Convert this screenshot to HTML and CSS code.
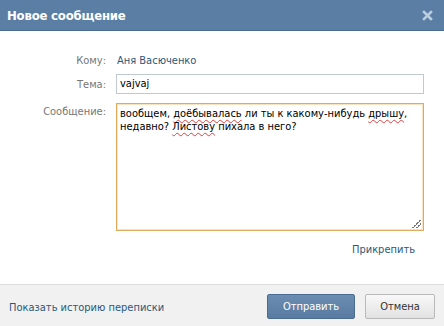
FILE: index.html
```html
<!DOCTYPE html>
<html lang="ru">
<head>
<meta charset="utf-8">
<title>Новое сообщение</title>
<link rel="stylesheet" href="styles.css">
</head>
<body>
<div class="dialog">
  <div class="header">
    <div class="title">Новое сообщение</div>
    <svg class="close" width="11" height="11" viewBox="0 0 11 11"><path d="M2 2 L9 9 M9 2 L2 9" stroke="#bccde0" stroke-width="2.6" stroke-linecap="square"/></svg>
  </div>
  <div class="body">
    <div class="form">
      <div class="label l-to">Кому:</div>
      <div class="field f-to"><a class="name">Аня Васюченко</a></div>
      <div class="label l-subj">Тема:</div>
      <div class="field f-subj"><div class="input">vajvaj</div></div>
      <div class="label l-msg">Сообщение:</div>
      <div class="field f-msg">
        <div class="textarea">вообщем, <span class="err">доёбывалась</span> ли ты к какому-нибудь <span class="err">дрышу</span>, недавно? <span class="err">Листову</span> пихала в него?<span class="grip"></span></div>
      </div>
    </div>
    <div class="attach"><a>Прикрепить</a></div>
  </div>
  <div class="footer">
    <a class="history">Показать историю переписки</a>
    <div class="buttons">
      <button class="btn send">Отправить</button>
      <button class="btn cancel">Отмена</button>
    </div>
  </div>
</div>
</body>
</html>
```
FILE: styles.css
```css
html, body {
  margin: 0;
  padding: 0;
  background: #fff;
}
body {
  font-family: "DejaVu Sans Condensed", "DejaVu Sans", sans-serif;
  font-stretch: semi-condensed;
  font-size: 11px;
  color: #000;
}
.dialog {
  width: 444px;
  height: 326px;
  display: flex;
  flex-direction: column;
}
.header {
  height: 30px;
  background: #5b7ea5;
  border-bottom: 1px solid #4a6b90;
  display: flex;
  align-items: center;
  justify-content: space-between;
  padding: 0 11px 0 7px;
  box-sizing: content-box;
}
.title {
  color: #fff;
  font-size: 13px;
  font-weight: bold;
  letter-spacing: -0.2px;
  padding-top: 1px;
}
.close {
  display: block;
}
.body {
  flex: 1;
  padding-top: 22px;
}
.form {
  display: grid;
  grid-template-columns: 106px 308px;
  column-gap: 10px;
  align-items: start;
}
.label {
  text-align: right;
  color: #777;
  line-height: 14px;
}
.l-to { padding-top: 1px; }
.f-to { line-height: 14px; padding-top: 1px; padding-left: 1px; }
.name { color: #2b587a; }
.l-subj { margin-top: 10px; line-height: 14px; }
.f-subj { margin-top: 6px; }
.input {
  height: 20px;
  box-sizing: border-box;
  border: 1px solid #c0c8d2;
  padding: 0 3px;
  line-height: 18px;
}
.l-msg { margin-top: 11px; }
.f-msg { margin-top: 9px; }
.textarea {
  position: relative;
  height: 128px;
  box-sizing: border-box;
  border: 1px solid #dcab5e;
  box-shadow: inset 0 0 0 1px #f7e3c0;
  padding: 3px 3px;
  line-height: 13px;
}
.err {
  text-decoration: underline wavy #e04040;
  text-decoration-thickness: 1px;
  text-underline-offset: 2px;
}
.grip {
  position: absolute;
  right: 2px;
  bottom: 2px;
  width: 10px;
  height: 10px;
  background:
    linear-gradient(135deg, transparent 0 55%, #777 55% 62%, transparent 62% 75%, #777 75% 82%, transparent 82%);
}
.attach {
  text-align: right;
  padding-right: 29px;
  margin-top: 12px;
  line-height: 14px;
}
.attach a { color: #2b587a; }
.footer {
  height: 41px;
  background: #f1f1f1;
  border-top: 1px solid #dcdcdc;
  display: flex;
  align-items: center;
  justify-content: space-between;
  padding: 0 9px 0 9px;
}
.history {
  color: #2b587a;
  padding-top: 3px;
}
.buttons {
  display: flex;
  gap: 10px;
  padding-top: 2px;
}
.btn {
  font-family: inherit;
  font-stretch: inherit;
  font-size: 11px;
  height: 25px;
  box-sizing: border-box;
  padding: 0;
  border-radius: 2px;
}
.send {
  width: 88px;
  color: #fff;
  background: linear-gradient(#6b8db2, #5a7ba1);
  border: 1px solid #4b6c92;
}
.cancel {
  width: 70px;
  color: #333;
  background: linear-gradient(#f8f8f8, #e2e2e2);
  border: 1px solid #b9b9b9;
}
```
